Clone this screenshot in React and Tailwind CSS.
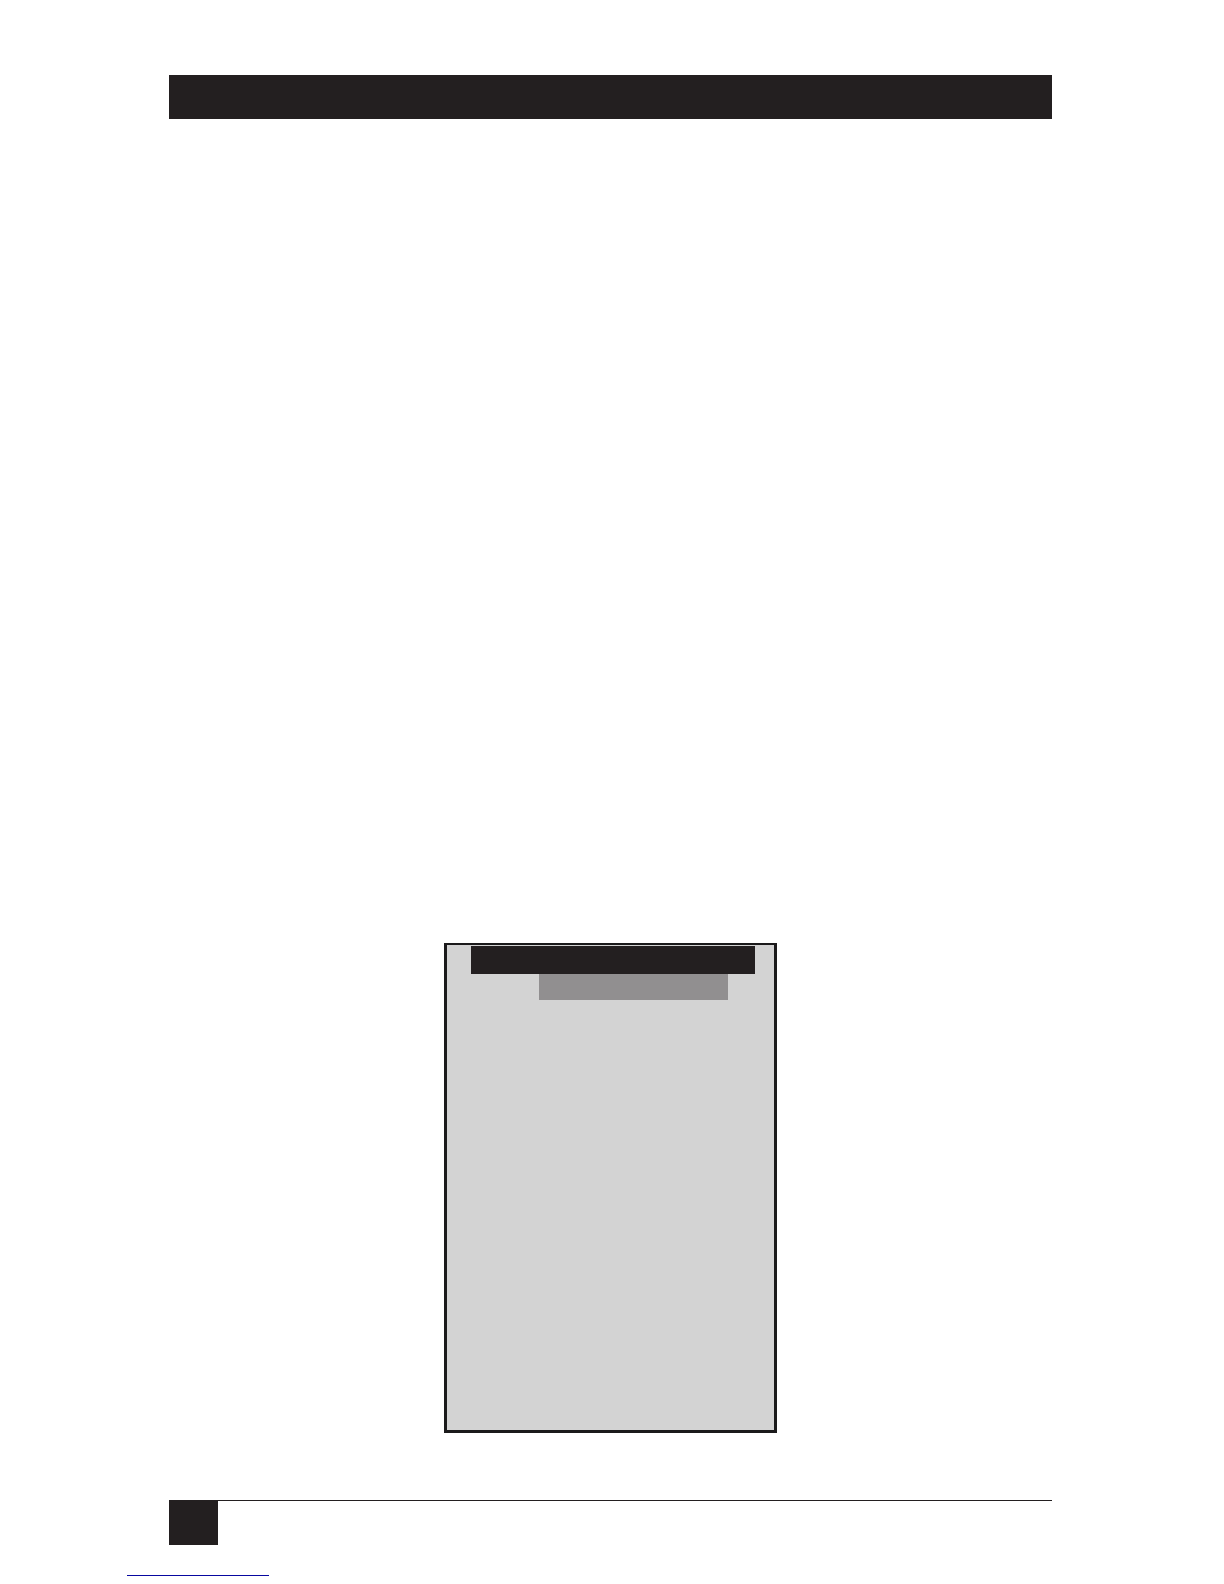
import React from "react";

const Header = () => <header className="h-11 ml-[169px] mr-[172px] bg-[#231f20]" />;

const Figure = () => (
  <figure className="w-[333px] h-[490px] border-[3px] border-t-2 border-[#1b1a1b] bg-[#d3d3d3] pt-px">
    <div className="h-7 ml-6 mr-[19px] bg-[#231f20]" />
    <div className="h-[26px] ml-[92px] mr-[46px] bg-[#918f90]" />
  </figure>
);

const Footer = () => (
  <footer className="ml-[169px] mr-[172px] border-t border-[#231f20]">
    <div className="w-[49px] h-11 bg-[#231f20]" />
  </footer>
);

const App = () => {
  return (
    <div className="min-h-screen flex flex-col bg-white pt-[75px] pb-2">
      <Header />
      <main className="flex-1 flex justify-center items-end ml-[169px] mr-[172px] pb-[67px]">
        <Figure />
      </main>
      <Footer />
      <a
        href="#top"
        aria-label="Back to top"
        className="block w-[142px] h-[31px] ml-[127px] border-b border-b-[#0808a0]"
      />
    </div>
  );
};

export default App;
